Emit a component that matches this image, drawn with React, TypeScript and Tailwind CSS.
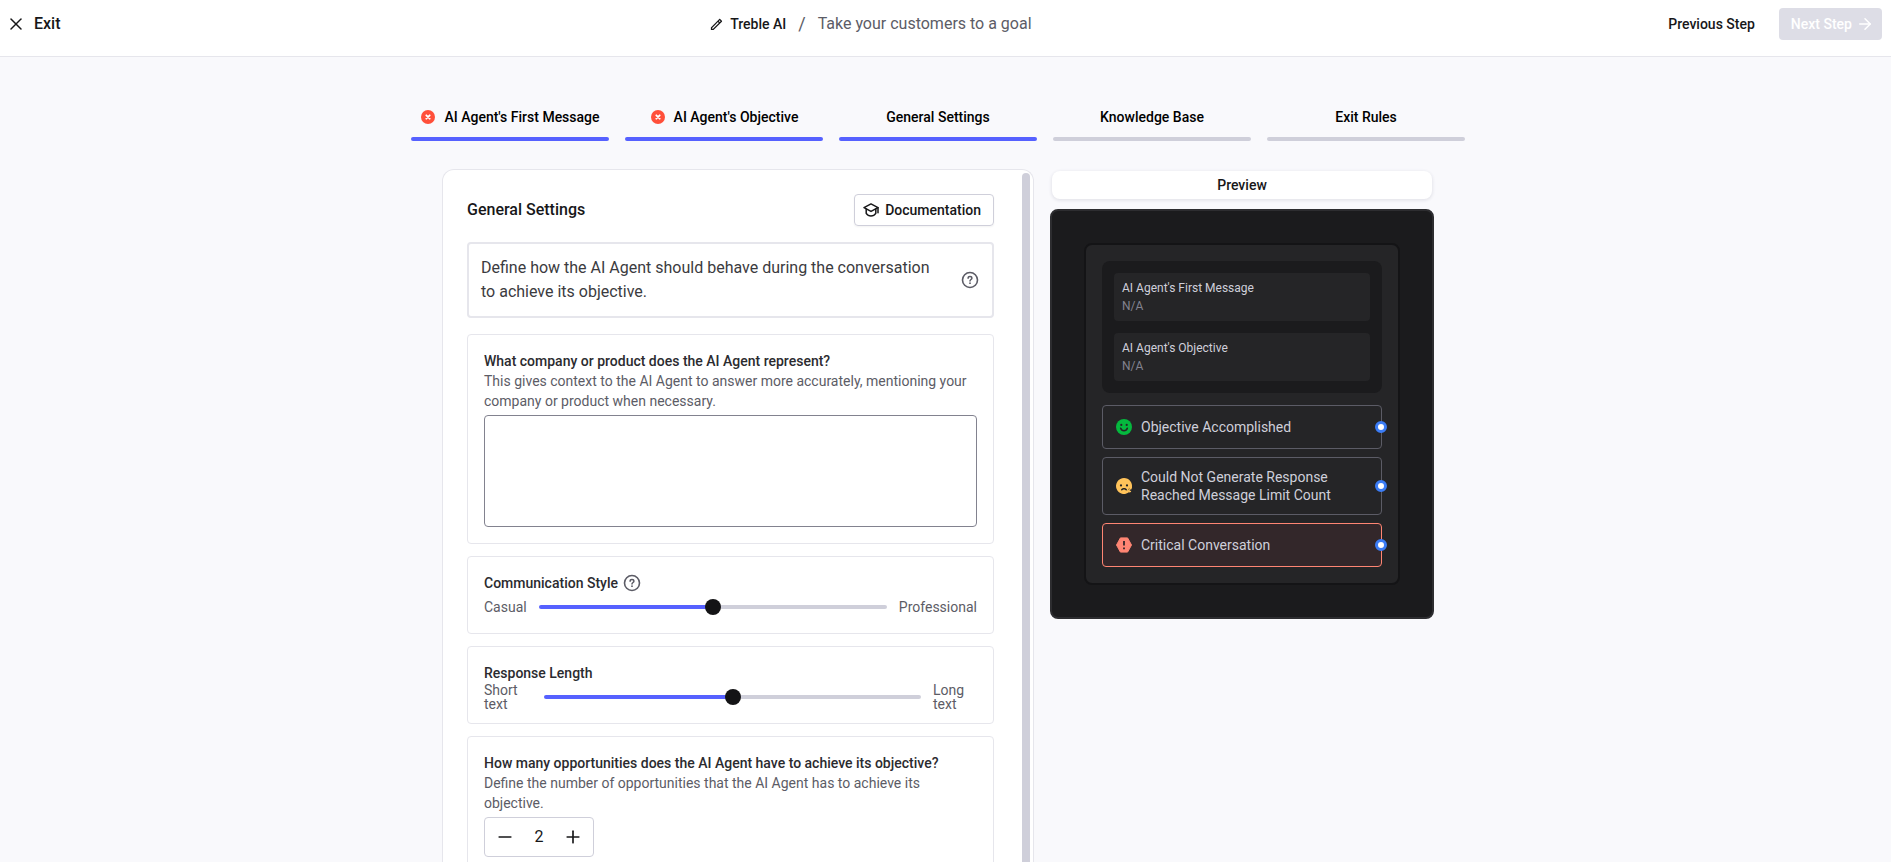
import { useId, useState } from 'react';
import type { FC, ReactNode } from 'react';
import { ArrowRight, Minus, Plus, X } from 'lucide-react';
import { RiPencilLine } from 'react-icons/ri';

type Step = {
  label: string;
  reached: boolean;
  error?: boolean;
};

const steps: Step[] = [
  { label: "AI Agent's First Message", reached: true, error: true },
  { label: "AI Agent's Objective", reached: true, error: true },
  { label: 'General Settings', reached: true },
  { label: 'Knowledge Base', reached: false },
  { label: 'Exit Rules', reached: false },
];

const ErrorIcon: FC = () => (
  <svg className="size-4" viewBox="0 0 16 16" aria-hidden="true">
    <circle cx="8" cy="8" r="7" fill="#ff4f3a" />
    <path d="M6.3 6.3l3.4 3.4M9.7 6.3l-3.4 3.4" stroke="#fff" strokeWidth="1.8" strokeLinecap="round" />
  </svg>
);

const HelpIcon: FC = () => (
  <svg className="size-5" viewBox="0 0 20 20" fill="none" stroke="#5c5c66" aria-hidden="true">
    <circle cx="10" cy="10" r="7.5" strokeWidth="1.6" />
    <path
      d="M8.1 8.2c0-1 .8-1.7 1.9-1.7s1.9.7 1.9 1.7c0 1.3-1.9 1.4-1.9 2.9"
      strokeWidth="1.5"
      strokeLinecap="round"
    />
    <circle cx="10" cy="13.2" r="0.9" fill="#5c5c66" stroke="none" />
  </svg>
);

const GraduationIcon: FC = () => (
  <svg
    className="size-4"
    viewBox="0 0 16 16"
    fill="none"
    stroke="currentColor"
    strokeWidth="1.5"
    strokeLinejoin="round"
    strokeLinecap="round"
    aria-hidden="true"
  >
    <path d="M1 5.6l7-3.7 7 3.7-7 3.8z" />
    <path d="M3.2 7v4.3c1.1 1.7 2.8 2.7 4.8 2.7s3.7-1 4.8-2.700V7" />
    <path d="M15 5.800v5" />
  </svg>
);

const SmileIcon: FC = () => (
  <svg className="size-[18px]" viewBox="0 0 18 18" fill="none" aria-hidden="true">
    <circle cx="9" cy="9" r="8" fill="#05b83e" />
    <circle cx="6.3" cy="6.9" r="1.1" fill="#252527" />
    <circle cx="11.7" cy="6.9" r="1.1" fill="#252527" />
    <path d="M5.7 10.2c.5 1.600 1.800 2.500 3.300 2.500s2.800-.9 3.300-2.500" stroke="#252527" strokeWidth="1.600" strokeLinecap="round" />
  </svg>
);

const WorriedIcon: FC = () => (
  <svg className="size-[18px]" viewBox="0 0 18 18" fill="none" aria-hidden="true">
    <path d="M9 1a8 8 0 0 1 7.700 10.200l-1.900-1-2.100 3.300 1.500 1.600A8 8 0 1 1 9 1z" fill="#ffc35a" />
    <circle cx="14.600" cy="13.700" r="1.700" fill="#ffc35a" />
    <path d="M14 9.500h3l-.5 3-2 .5z" fill="#ffc35a" />
    <circle cx="6" cy="8.400" r="1.100" fill="#252527" />
    <circle cx="12" cy="8.400" r="1.100" fill="#252527" />
    <path d="M6.800 12.700l1.200-.9h2l1.200.9" stroke="#252527" strokeWidth="1.500" strokeLinecap="round" strokeLinejoin="round" />
    <path d="M14.800 13.200h2.700" stroke="#252527" strokeWidth="1.200" />
  </svg>
);

const CriticalIcon: FC = () => (
  <svg className="size-[18px]" viewBox="0 0 18 18" fill="none" aria-hidden="true">
    <path d="M5.4 1.900h7.200L16.500 9l-3.900 7.100H5.400L1.500 9z" fill="#ff8573" stroke="#ff8573" strokeLinejoin="round" />
    <path d="M9 5v4.600M9 11.400v1.800" stroke="#33272a" strokeWidth="1.800" />
  </svg>
);

const Header: FC = () => (
  <header className="flex items-center justify-between border-b border-[#e6e6ec] bg-white pt-2 pr-[9px] pb-4 pl-1.5">
    <button type="button" className="flex h-8 items-center gap-2 pr-6 text-base font-medium">
      <X size={20} strokeWidth={1.8} />
      Exit
    </button>
    <div className="flex items-center">
      <button type="button" className="flex items-center gap-1.5 text-sm font-medium">
        <RiPencilLine size={15} />
        Treble AI
      </button>
      <span className="px-3 text-lg leading-6 text-[#5c5c66]">/</span>
      <h1 className="text-base text-[#5c5c66]">Take your customers to a goal</h1>
    </div>
    <div className="flex items-center gap-3">
      <button type="button" className="h-8 px-3 text-sm font-medium">
        Previous Step
      </button>
      <button
        type="button"
        disabled
        className="flex h-8 items-center gap-1 rounded bg-[#dddde6] pr-2 pl-3 text-sm font-medium text-white"
      >
        Next Step
        <ArrowRight size={18} strokeWidth={2} />
      </button>
    </div>
  </header>
);

const StepTabs: FC = () => (
  <nav className="grid w-full max-w-[1054px] grid-cols-5 gap-4">
    {steps.map((step) => (
      <button key={step.label} type="button" className="flex flex-col gap-2.5 text-sm font-medium text-black">
        <span className="flex h-5 w-full items-center justify-center gap-2">
          {step.error && <ErrorIcon />}
          {step.label}
        </span>
        <span className={step.reached ? 'h-1 w-full rounded-full bg-[#5661ff]' : 'h-1 w-full rounded-full bg-[#cfcfda]'} />
      </button>
    ))}
  </nav>
);

const Card: FC<{ children: ReactNode }> = ({ children }) => (
  <section className="flex flex-col gap-1 rounded border border-[#e6e6ec] p-4 text-sm">{children}</section>
);

type SliderCardProps = {
  title: string;
  from: string;
  to: string;
  help?: boolean;
  narrow?: boolean;
};

const SliderCard: FC<SliderCardProps> = ({ title, from, to, help, narrow }) => {
  const id = useId();
  const [value, setValue] = useState(50);

  return (
    <Card>
      <div className="flex h-5 items-center gap-1">
        <label htmlFor={id} className="font-medium text-[#2b2b2f]">
          {title}
        </label>
        {help && (
          <button type="button" aria-label={`${title} help`}>
            <HelpIcon />
          </button>
        )}
      </div>
      <div className="flex h-5 items-center gap-3 leading-[14px] text-[#5c5c66]">
        <span className={narrow ? 'w-12 shrink-0 pr-2' : ''}>{from}</span>
        <input
          id={id}
          type="range"
          value={value}
          onChange={(event) => setValue(Number(event.target.value))}
          style={{ background: `linear-gradient(to right, #5661ff ${value}%, #cfcfda ${value}%)` }}
          className="h-1 min-w-0 flex-1 appearance-none rounded-full [&::-webkit-slider-thumb]:size-4 [&::-webkit-slider-thumb]:appearance-none [&::-webkit-slider-thumb]:rounded-full [&::-webkit-slider-thumb]:bg-[#131315]"
        />
        <span className={narrow ? 'w-11 shrink-0 pr-2' : ''}>{to}</span>
      </div>
    </Card>
  );
};

const SettingsPanel: FC = () => {
  const [company, setCompany] = useState('');
  const [attempts, setAttempts] = useState(2);

  return (
    <div className="flex min-h-0 min-w-0 rounded-t-xl border border-b-0 border-[#e6e6ec] bg-white">
      <div className="flex min-w-0 flex-1 flex-col gap-4 overflow-hidden p-6">
        <div className="flex items-center justify-between">
          <h2 className="text-base font-medium">General Settings</h2>
          <button
            type="button"
            className="flex h-8 items-center gap-1.5 rounded border border-[#cfcfda] px-2 pr-3 text-sm font-medium shadow-xs"
          >
            <GraduationIcon />
            Documentation
          </button>
        </div>
        <div className="flex items-center justify-between gap-4 rounded border-2 border-[#e6e6ec] p-3 text-base text-[#3b3b40]">
          <p>Define how the AI Agent should behave during the conversation to achieve its objective.</p>
          <button type="button" aria-label="Help">
            <HelpIcon />
          </button>
        </div>
        <div className="flex flex-col gap-3">
          <Card>
            <div>
              <label htmlFor="company" className="font-medium text-[#2b2b2f]">
                What company or product does the AI Agent represent?
              </label>
              <p className="text-[#5c5c66]">
                This gives context to the AI Agent to answer more accurately, mentioning your company or product when
                necessary.
              </p>
            </div>
            <textarea
              id="company"
              value={company}
              onChange={(event) => setCompany(event.target.value)}
              className="h-28 resize-none rounded border border-[#82828f] px-3 py-2"
            />
          </Card>
          <SliderCard title="Communication Style" from="Casual" to="Professional" help />
          <SliderCard title="Response Length" from="Short text" to="Long text" narrow />
          <Card>
            <div>
              <label htmlFor="attempts" className="font-medium text-[#2b2b2f]">
                How many opportunities does the AI Agent have to achieve its objective?
              </label>
              <p className="text-[#5c5c66]">
                Define the number of opportunities that the AI Agent has to achieve its objective.
              </p>
            </div>
            <div className="flex h-10 items-center self-start rounded border border-[#cfcfda] px-2.5">
              <button type="button" aria-label="Decrease" onClick={() => setAttempts(Math.max(1, attempts - 1))}>
                <Minus size={20} />
              </button>
              <input
                id="attempts"
                inputMode="numeric"
                value={attempts}
                onChange={(event) => setAttempts(Number(event.target.value) || 1)}
                className="w-12 text-center text-base"
              />
              <button type="button" aria-label="Increase" onClick={() => setAttempts(attempts + 1)}>
                <Plus size={20} />
              </button>
            </div>
          </Card>
        </div>
      </div>
      <div className="flex w-[15px] justify-end pt-[3px] pr-[3px]">
        <div className="w-2 rounded-t-full bg-[#cfcfda]" />
      </div>
    </div>
  );
};

const PreviewField: FC<{ label: string }> = ({ label }) => (
  <div className="rounded bg-[#252527] px-2 py-1.5 text-xs leading-[18px]">
    <div className="text-[#cfcfda]">{label}</div>
    <div className="text-[#82828f]">N/A</div>
  </div>
);

type OutcomeProps = {
  icon: ReactNode;
  critical?: boolean;
  children: ReactNode;
};

const Outcome: FC<OutcomeProps> = ({ icon, critical, children }) => (
  <div
    className={
      critical
        ? 'relative flex min-h-11 items-center gap-2 rounded border border-[#ff8573] bg-[#33272a] px-3 py-2.5 text-sm leading-[18px]'
        : 'relative flex min-h-11 items-center gap-2 rounded border border-[#5c5c66] px-3 py-2.5 text-sm leading-[18px]'
    }
  >
    {icon}
    <div className="text-[#cfcfda]">{children}</div>
    <span className="absolute top-1/2 -right-1.5 size-3 -translate-y-1/2 rounded-full border-[3px] border-[#3b7cf5] bg-white" />
  </div>
);

const Preview: FC = () => (
  <aside className="flex flex-col gap-2.5 self-start">
    <div className="px-0.5 pt-0.5">
      <h2 className="rounded-lg bg-white py-1 text-center text-sm font-medium shadow-[0_1px_3px_1px_#e6e6ec]">Preview</h2>
    </div>
    <div className="rounded-lg border-2 border-[#2d2d30] bg-[#1b1b1d] p-8">
      <div className="flex flex-col gap-3 rounded-lg border-2 border-[#141416] bg-[#252527] p-4">
        <div className="flex flex-col gap-3 rounded-lg bg-[#1b1b1d] p-3">
          <PreviewField label="AI Agent's First Message" />
          <PreviewField label="AI Agent's Objective" />
        </div>
        <div className="flex flex-col gap-2">
          <Outcome icon={<SmileIcon />}>Objective Accomplished</Outcome>
          <Outcome icon={<WorriedIcon />}>
            <p>Could Not Generate Response</p>
            <p>Reached Message Limit Count</p>
          </Outcome>
          <Outcome icon={<CriticalIcon />} critical>
            Critical Conversation
          </Outcome>
        </div>
      </div>
    </div>
  </aside>
);

const App: FC = () => (
  <div className="flex h-screen flex-col overflow-hidden bg-[#f9f9fc] font-[Roboto,sans-serif] text-[#171719]">
    <Header />
    <main className="flex min-h-0 flex-1 flex-col items-center gap-7 pt-[50px] pr-[15px]">
      <StepTabs />
      <div className="grid min-h-0 w-full max-w-[992px] flex-1 grid-cols-[592fr_384fr] grid-rows-[minmax(0,1fr)] gap-4">
        <SettingsPanel />
        <Preview />
      </div>
    </main>
  </div>
);

export default App;
